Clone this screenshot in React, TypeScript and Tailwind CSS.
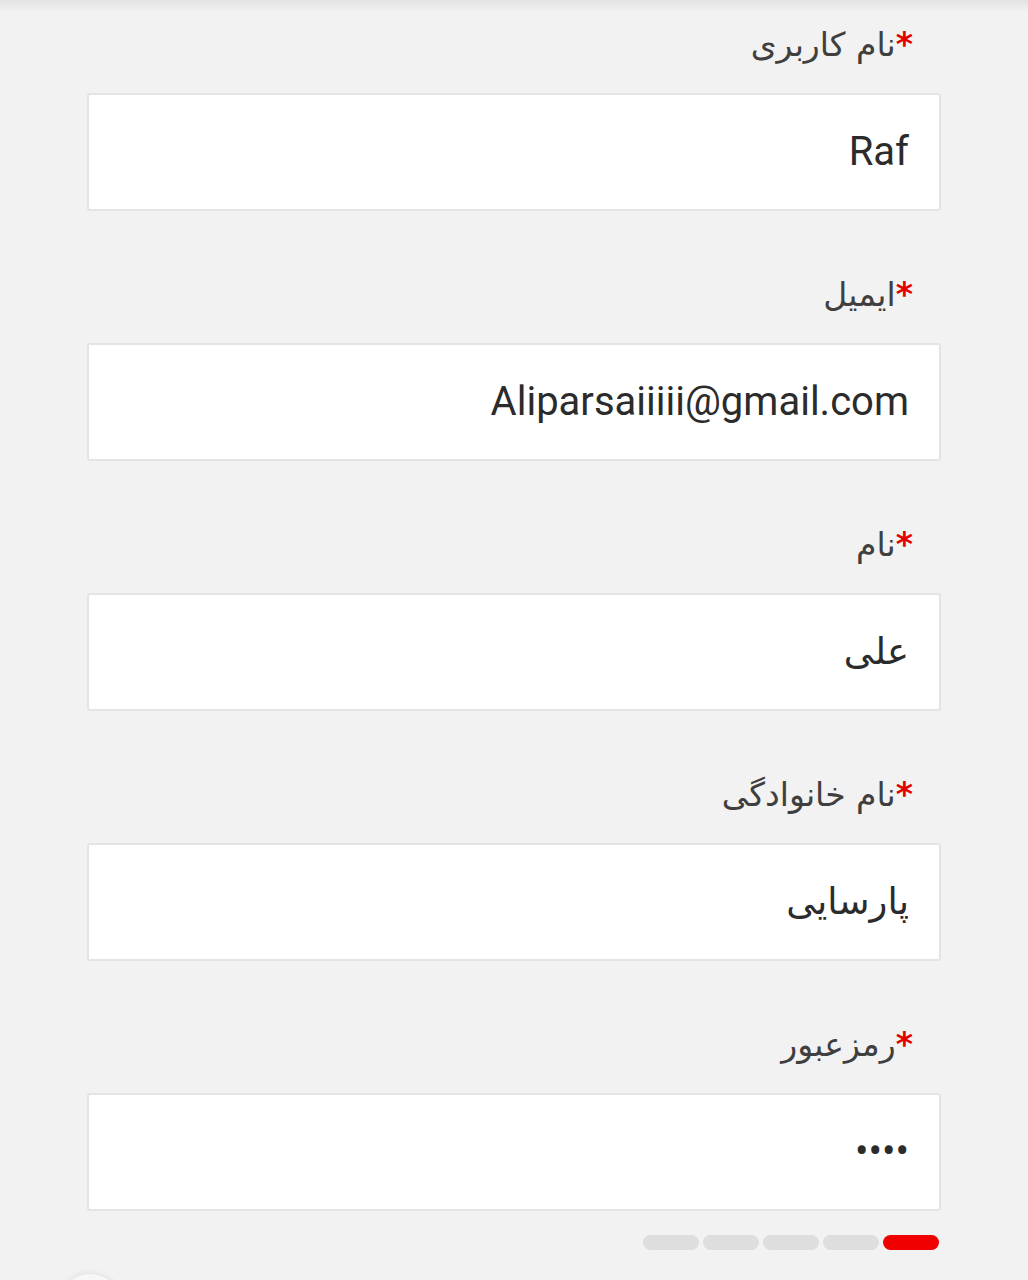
import React from "react";

const fields: { label: string; value: string; latin?: boolean }[] = [
  { label: "نام کاربری", value: "Raf", latin: true },
  { label: "ایمیل", value: "Aliparsaiiiii@gmail.com", latin: true },
  { label: "نام", value: "علی" },
  { label: "نام خانوادگی", value: "پارسایی" },
  { label: "رمزعبور", value: "••••", latin: true },
];

export default function App() {
  return (
    <div
      className="relative h-[1280px] w-full overflow-hidden bg-[#f2f2f2]"
      style={{ fontFamily: "'Noto Sans', 'DejaVu Sans', sans-serif" }}
    >
      <div className="absolute left-0 right-0 top-0 h-[12px] bg-gradient-to-b from-[#e2e2e2] to-[#f2f2f2]" />
      <div className="relative px-[87px] pt-[20px]">
        {fields.map((f, i) => (
          <div key={i} className={i === 0 ? "" : "mt-[59px]"}>
            <div
              dir="rtl"
              className="h-[50px] pr-[28px] text-[33px] leading-[50px] text-[#3f3f3f]"
              style={{ fontFamily: "'DejaVu Sans', 'Noto Sans', sans-serif" }}
            >
              <span className="font-bold text-[#e30000]">*</span>
              {f.label}
            </div>
            <div className="mt-[23px] flex h-[118px] items-center justify-end rounded-[3px] border-2 border-[#e4e4e4] bg-white pr-[30px]">
              <span
                className={f.latin ? "text-[40px] text-[#2b2b2b]" : "text-[37px] text-[#2b2b2b]"}
                style={{
                  fontFamily: f.latin
                    ? "Roboto, 'Liberation Sans', sans-serif"
                    : "'DejaVu Sans', 'Noto Sans', sans-serif",
                }}
              >
                {f.value}
              </span>
            </div>
          </div>
        ))}
        <div className="mt-[24px] flex justify-end gap-[4px] pr-[2px]">
          <div className="h-[15px] w-[56px] rounded-full bg-[#dedede]" />
          <div className="h-[15px] w-[56px] rounded-full bg-[#dedede]" />
          <div className="h-[15px] w-[56px] rounded-full bg-[#dedede]" />
          <div className="h-[15px] w-[56px] rounded-full bg-[#dedede]" />
          <div className="h-[15px] w-[56px] rounded-full bg-[#f00000]" />
        </div>
      </div>
      <div className="absolute left-[58px] top-[1273px] h-[64px] w-[64px] rounded-full border border-[#e8e8e8] bg-[#f7f7f7] shadow-[0_0_6px_rgba(0,0,0,0.08)]" />
    </div>
  );
}
